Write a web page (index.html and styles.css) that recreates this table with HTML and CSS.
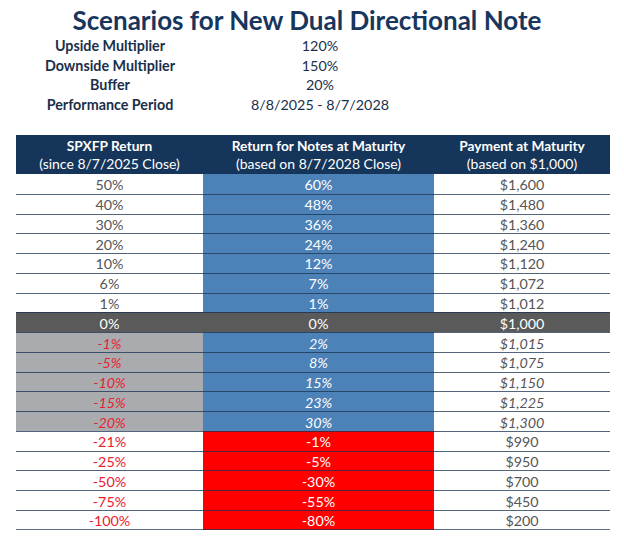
FILE: index.html
```html
<!DOCTYPE html>
<html>
<head>
<meta charset="utf-8">
<link rel="stylesheet" href="styles.css">
</head>
<body>
<div class="page">
  <h1 class="title">Scenarios for New Dual Directional Note</h1>
  <div class="params">
    <div class="plabel">Upside Multiplier</div><div class="pval">120%</div>
    <div class="plabel">Downside Multiplier</div><div class="pval">150%</div>
    <div class="plabel">Buffer</div><div class="pval">20%</div>
    <div class="plabel">Performance Period</div><div class="pval">8/8/2025 - 8/7/2028</div>
  </div>
  <div class="table">
    <div class="hcell"><b>SPXFP Return</b><span>(since 8/7/2025 Close)</span></div>
    <div class="hcell"><b>Return for Notes at Maturity</b><span>(based on 8/7/2028 Close)</span></div>
    <div class="hcell"><b>Payment at Maturity</b><span>(based on $1,000)</span></div>

    <div class="row up"><div>50%</div><div class="blue">60%</div><div>$1,600</div></div>
    <div class="row up"><div>40%</div><div class="blue">48%</div><div>$1,480</div></div>
    <div class="row up"><div>30%</div><div class="blue">36%</div><div>$1,360</div></div>
    <div class="row up"><div>20%</div><div class="blue">24%</div><div>$1,240</div></div>
    <div class="row up"><div>10%</div><div class="blue">12%</div><div>$1,120</div></div>
    <div class="row up"><div>6%</div><div class="blue">7%</div><div>$1,072</div></div>
    <div class="row up"><div>1%</div><div class="blue">1%</div><div>$1,012</div></div>
    <div class="row zero"><div>0%</div><div>0%</div><div>$1,000</div></div>
    <div class="row buf"><div class="gray">-1%</div><div class="blue">2%</div><div>$1,015</div></div>
    <div class="row buf"><div class="gray">-5%</div><div class="blue">8%</div><div>$1,075</div></div>
    <div class="row buf"><div class="gray">-10%</div><div class="blue">15%</div><div>$1,150</div></div>
    <div class="row buf"><div class="gray">-15%</div><div class="blue">23%</div><div>$1,225</div></div>
    <div class="row buf"><div class="gray">-20%</div><div class="blue">30%</div><div>$1,300</div></div>
    <div class="row down"><div>-21%</div><div class="red">-1%</div><div>$990</div></div>
    <div class="row down"><div>-25%</div><div class="red">-5%</div><div>$950</div></div>
    <div class="row down"><div>-50%</div><div class="red">-30%</div><div>$700</div></div>
    <div class="row down"><div>-75%</div><div class="red">-55%</div><div>$450</div></div>
    <div class="row down"><div>-100%</div><div class="red">-80%</div><div>$200</div></div>
  </div>
</div>
</body>
</html>
```

FILE: styles.css
```css
html, body {
  margin: 0;
  padding: 0;
  background: #ffffff;
}
body {
  font-family: Lato, "Open Sans", sans-serif;
  color: #555555;
}
.page {
  width: 624px;
  height: 547px;
  padding-top: 5px;
  box-sizing: border-box;
}
.title {
  margin: 0;
  padding-right: 10px;
  text-align: center;
  font-size: 26px;
  line-height: 30px;
  font-weight: 700;
  color: #17365d;
}
.params {
  display: grid;
  grid-template-columns: 188px 232px;
  grid-auto-rows: 19.5px;
  padding-left: 16px;
  margin-top: 1px;
  align-items: center;
  font-size: 14.3px;
}
.plabel {
  text-align: center;
  font-weight: 700;
  color: #1a2f4a;
}
.pval {
  text-align: center;
  color: #1a2f4a;
}
.table {
  margin: 21px 0 0 16px;
  width: 594px;
  display: grid;
  grid-template-columns: 187px 231px 176px;
  font-size: 14.3px;
}
.hcell {
  background: #15355a;
  color: #ffffff;
  height: 39px;
  display: flex;
  flex-direction: column;
  align-items: center;
  justify-content: center;
  line-height: 18px;
  font-size: 13.7px;
}
.hcell b {
  font-weight: 700;
}
.hcell span {
  font-weight: 400;
  font-size: 14px;
}
.row {
  display: contents;
}
.row > div {
  height: 19.78px;
  box-sizing: border-box;
  display: flex;
  align-items: center;
  justify-content: center;
  border-top: 1.5px solid rgba(25, 50, 80, 0.75);
  padding-top: 1px;
}
.row:nth-child(4) > div {
  border-top: none;
}
.row.down:last-child > div {
  border-bottom: 1.5px solid rgba(25, 50, 80, 0.7);
}
.blue {
  background: #4c82b8;
  color: #ffffff;
}
.red {
  background: #ff0000;
  color: #ffffff;
}
.gray {
  background: #a9abae;
}
.zero > div {
  background: #5a5a5a;
  color: #ffffff;
}
.buf > div {
  font-style: italic;
}
.buf > .gray {
  color: #e8202f;
}
.down > div:first-child {
  color: #e8202f;
}
```
